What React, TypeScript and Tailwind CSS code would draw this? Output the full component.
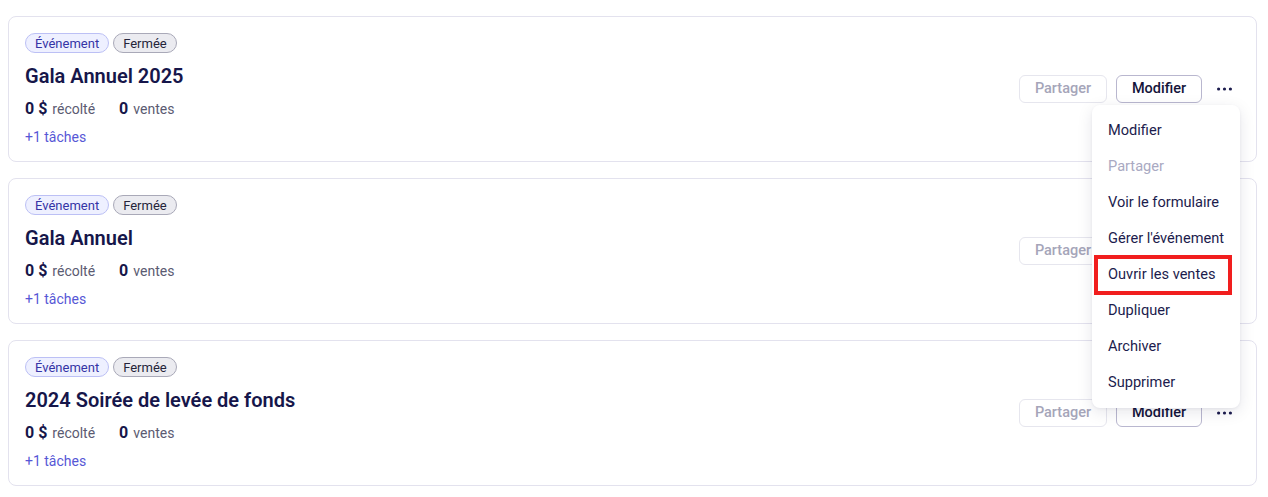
import React from "react";

const cards = [
  { title: "Gala Annuel 2025", menu: true },
  { title: "Gala Annuel", menu: false },
  { title: "2024 Soirée de levée de fonds", menu: false },
];

const menuItems = [
  { label: "Modifier" },
  { label: "Partager", disabled: true },
  { label: "Voir le formulaire" },
  { label: "Gérer l'événement" },
  { label: "Ouvrir les ventes", highlight: true },
  { label: "Dupliquer" },
  { label: "Archiver" },
  { label: "Supprimer" },
];

function Dots() {
  return (
    <svg width="15" height="4" viewBox="0 0 15 4" fill="#1c1c4d">
      <circle cx="1.6" cy="2" r="1.6" />
      <circle cx="7.5" cy="2" r="1.6" />
      <circle cx="13.4" cy="2" r="1.6" />
    </svg>
  );
}

function Card({ title, menu }: { title: string; menu: boolean }) {
  return (
    <div className="flex items-center justify-between rounded-lg border border-[#e3e2ee] bg-white p-4">
      <div className="flex flex-col">
        <div className="flex h-5 items-center gap-[4px]">
          <span className="flex h-5 items-center rounded-full border border-[#bcc0f5] bg-[#eef0ff] px-[9px] text-[13px] leading-none text-[#3535a6]">
            Événement
          </span>
          <span className="flex h-5 items-center rounded-full border border-[#a9a9b8] bg-[#ebebf0] px-[9px] text-[13px] leading-none text-[#25253a]">
            Fermée
          </span>
        </div>
        <div className="mt-[9px] h-7 text-[20px] font-semibold leading-7 text-[#16164a]">{title}</div>
        <div className="mt-[9px] flex h-5 items-baseline overflow-hidden leading-5">
          <span className="text-[16px] font-bold text-[#16164a]">0 $</span>
          <span className="ml-[5px] text-[14px] text-[#5b5b72]">récolté</span>
          <span className="ml-[24px] text-[16px] font-bold text-[#16164a]">0</span>
          <span className="ml-[5px] text-[14px] text-[#5b5b72]">ventes</span>
        </div>
        <div className="mt-[10px] h-4 text-[14px] leading-4 text-[#5757d6]">+1 tâches</div>
      </div>
      <div className="flex items-center">
        <button className="flex h-[28px] w-[88px] items-center justify-center rounded-md border border-[#e6e6ee] bg-white text-[14.5px] font-medium text-[#a5a5b9]">
          Partager
        </button>
        <button className="ml-[9px] flex h-[28px] w-[86px] items-center justify-center rounded-md border border-[#b9b7cf] bg-white text-[14.5px] font-medium text-[#14143a]">
          Modifier
        </button>
        <div className="relative ml-[6px]">
          <button className="flex h-8 w-8 items-center justify-center">
            <Dots />
          </button>
          {menu && (
            <div className="absolute right-0 top-[32px] z-50 w-[148px] rounded-lg bg-white px-1 pb-[7px] pt-2 shadow-[0_4px_16px_rgba(20,20,60,0.10),0_1px_3px_rgba(20,20,60,0.06)]">
              {menuItems.map((it) => (
                <div
                  key={it.label}
                  className={
                    "relative flex h-9 items-center px-3 text-[14.6px] whitespace-nowrap " +
                    (it.disabled ? "text-[#a9a9c2]" : "text-[#1c1c4d]")
                  }
                >
                  {it.label}
                  {it.highlight && (
                    <span className="pointer-events-none absolute bottom-[-2px] left-[-2px] right-[4px] top-[-2px] border-4 border-[#f11e1e]" />
                  )}
                </div>
              ))}
            </div>
          )}
        </div>
      </div>
    </div>
  );
}

export default function App() {
  return (
    <div
      className="min-h-[497px] bg-white pl-2 pr-[11px] pt-4"
      style={{ fontFamily: "Roboto, 'Noto Sans', sans-serif" }}
    >
      <div className="flex flex-col gap-4">
        {cards.map((c) => (
          <Card key={c.title} title={c.title} menu={c.menu} />
        ))}
      </div>
    </div>
  );
}
